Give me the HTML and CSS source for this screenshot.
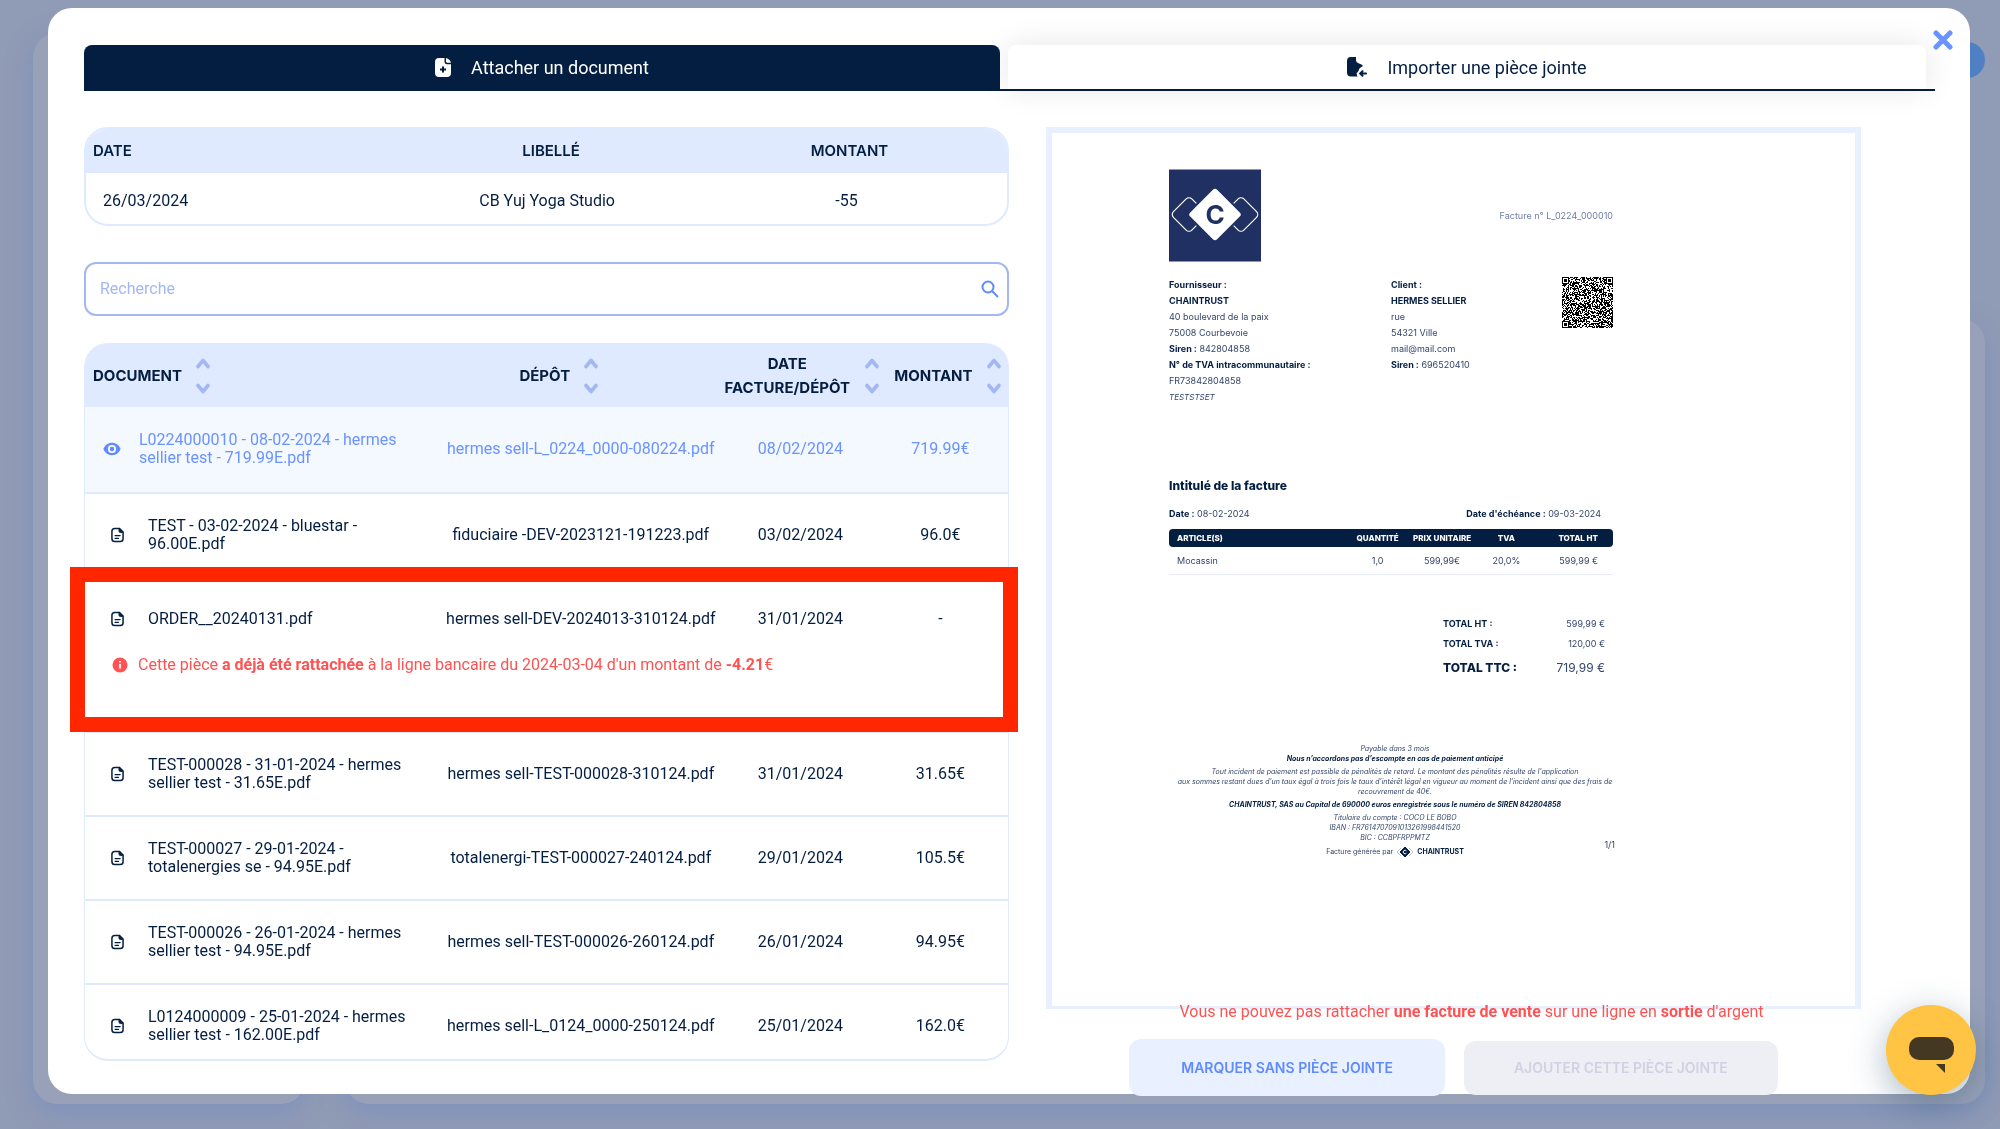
FILE: index.html
```
<!DOCTYPE html>
<html lang="fr">
<head>
  <meta charset="UTF-8">
  <meta name="viewport" content="width=device-width, initial-scale=1.0">
  <title>Attacher un document</title>
  <link rel="stylesheet" href="styles.css">
</head>
<body>
  <svg class="sprite" aria-hidden="true">
    <symbol id="icon-file" viewBox="0 0 14 16">
      <path d="M4 1h5.2L13 4.8V12a3 3 0 0 1-3 3H4a3 3 0 0 1-3-3V4a3 3 0 0 1 3-3z" fill="none" stroke="currentColor" stroke-width="1.6"/>
      <path d="M8.6 1.2v2.6a1.6 1.6 0 0 0 1.6 1.6h2.6z" fill="currentColor" stroke="currentColor"/>
      <path d="M4.4 8.6h5.4M4.4 11.6h3.6" stroke="currentColor" stroke-width="1.4" stroke-linecap="round"/>
    </symbol>
    <symbol id="icon-sort" viewBox="0 0 14 36">
      <path d="M2 8.500l5-6 5 6M2 27.500l5 6 5-6" fill="none" stroke="currentColor" stroke-width="3.600" stroke-linecap="round" stroke-linejoin="round"/>
    </symbol>
  </svg>

  <div class="backdrop">
    <div class="back-card"></div>
    <div class="back-card"></div>
    <span class="back-dot"></span>
  </div>

  <main class="modal">
    <button class="close" aria-label="Fermer">
      <svg viewBox="0 0 20 20"><path d="M3 3l14 14M17 3L3 17" stroke="currentColor" stroke-width="5" stroke-linecap="round"/></svg>
    </button>

    <nav class="tabs">
      <button class="tab active">
        <svg viewBox="0 0 16 20"><path d="M4 1h5.500v4A2.500 2.500 0 0 0 12 7.200h4V16a4 4 0 0 1-4 4H4a4 4 0 0 1-4-4V5a4 4 0 0 1 4-4z" fill="#fff"/><path d="M11 1c2.500.6 4.400 2.300 5 4.800h-3.500A1.500 1.500 0 0 1 11 4.300z" fill="#fff"/><path d="M8 9.500v6M5 12.500h6" stroke="#041e42" stroke-width="2"/></svg>
        Attacher un document
      </button>
      <button class="tab">
        <svg viewBox="0 0 20 20"><path d="M4 0h5v3.500a3 3 0 0 0 2.500 2.700L15.500 8v1.500c-2 .8-3.500 2-4 4.500l-2 2.500 1 3H4a4 4 0 0 1-4-4V4a4 4 0 0 1 4-4z" fill="#041e42"/><path d="M19 16.500h-5.500M15.500 14.300l-2.300 2.200 2.300 2.200" fill="none" stroke="#041e42" stroke-width="2" stroke-linecap="round"/></svg>
        Importer une pièce jointe
      </button>
    </nav>

    <div class="content">
      <section class="left">
        <table class="summary">
          <thead>
            <tr><th class="s-date">Date</th><th class="s-label">Libellé</th><th class="s-amount">Montant</th></tr>
          </thead>
          <tbody>
            <tr><td>26/03/2024</td><td>CB Yuj Yoga Studio</td><td>-55</td></tr>
          </tbody>
        </table>

        <div class="search">
          <input type="text" placeholder="Recherche" aria-label="Recherche">
          <button aria-label="Lancer la recherche">
            <svg viewBox="0 0 18 18"><circle cx="7" cy="7" r="5.500"/><path d="M11 11l6 6"/></svg>
          </button>
        </div>

        <table class="docs">
          <thead>
            <tr>
              <th class="c-doc"><div>Document <svg><use href="#icon-sort"/></svg></div></th>
              <th class="c-depot"><div>Dépôt <svg><use href="#icon-sort"/></svg></div></th>
              <th class="c-date"><div><span>Date facture/dépôt</span> <svg><use href="#icon-sort"/></svg></div></th>
              <th class="c-amount"><div>Montant <svg><use href="#icon-sort"/></svg></div></th>
            </tr>
          </thead>
          <tbody>
            <tr class="selected">
              <td><div class="doc"><svg class="eye" viewBox="0 0 18 14"><path d="M9 .8c4 0 7.200 2.700 8.600 6.200-1.400 3.500-4.600 6.200-8.600 6.200S1.800 10.500.4 7C1.800 3.500 5 .8 9 .8z" fill="#5f8bff"/><circle cx="9" cy="7" r="3.200" fill="none" stroke="#fff" stroke-width="1.800"/></svg><span>L0224000010 - 08-02-2024 - hermes sellier test - 719.99E.pdf</span></div></td>
              <td>hermes sell-L_0224_0000-080224.pdf</td><td>08/02/2024</td><td>719.99€</td>
            </tr>
            <tr>
              <td><div class="doc"><svg><use href="#icon-file"/></svg><span>TEST - 03-02-2024 - bluestar - 96.00E.pdf</span></div></td>
              <td>fiduciaire -DEV-2023121-191223.pdf</td><td>03/02/2024</td><td>96.0€</td>
            </tr>
            <tr class="attached">
              <td><div class="doc"><svg><use href="#icon-file"/></svg><span>ORDER__20240131.pdf</span></div></td>
              <td>hermes sell-DEV-2024013-310124.pdf</td><td>31/01/2024</td><td>-</td>
            </tr>
            <tr class="notice">
              <td colspan="4">
                <div class="notice-text">
                  <svg viewBox="0 0 16 16"><circle cx="8" cy="8" r="7.500" fill="#ff5252"/><path d="M8 7v4.500M8 4v1.400" stroke="#fff" stroke-width="1.800"/></svg>
                  <span>Cette pièce <b>a déjà été rattachée</b> à la ligne bancaire du 2024-03-04 d'un montant de <b>-4.21</b>€</span>
                </div>
                <div class="highlight"></div>
              </td>
            </tr>
            <tr>
              <td><div class="doc"><svg><use href="#icon-file"/></svg><span>TEST-000028 - 31-01-2024 - hermes sellier test - 31.65E.pdf</span></div></td>
              <td>hermes sell-TEST-000028-310124.pdf</td><td>31/01/2024</td><td>31.65€</td>
            </tr>
            <tr>
              <td><div class="doc"><svg><use href="#icon-file"/></svg><span>TEST-000027 - 29-01-2024 - totalenergies se - 94.95E.pdf</span></div></td>
              <td>totalenergi-TEST-000027-240124.pdf</td><td>29/01/2024</td><td>105.5€</td>
            </tr>
            <tr>
              <td><div class="doc"><svg><use href="#icon-file"/></svg><span>TEST-000026 - 26-01-2024 - hermes sellier test - 94.95E.pdf</span></div></td>
              <td>hermes sell-TEST-000026-260124.pdf</td><td>26/01/2024</td><td>94.95€</td>
            </tr>
            <tr>
              <td><div class="doc"><svg><use href="#icon-file"/></svg><span>L0124000009 - 25-01-2024 - hermes sellier test - 162.00E.pdf</span></div></td>
              <td>hermes sell-L_0124_0000-250124.pdf</td><td>25/01/2024</td><td>162.0€</td>
            </tr>
          </tbody>
        </table>
      </section>

      <section class="right">
        <div class="viewer">
          <article class="invoice">
            <div class="inv-top">
              <svg class="inv-logo" viewBox="0 0 92 92">
                <rect width="92" height="92" fill="#203062"/>
                <g fill="none" stroke="#fff" stroke-width="1.200">
                  <rect x="7" y="32" width="26" height="26" rx="4" transform="rotate(45 20 45)"/>
                  <rect x="59" y="32" width="26" height="26" rx="4" transform="rotate(45 72 45)"/>
                </g>
                <rect x="26" y="25" width="40" height="40" rx="4" transform="rotate(45 46 45)" fill="#fff" stroke="#203062" stroke-width="2"/>
                <text x="46" y="54" text-anchor="middle" class="logo-letter">C</text>
              </svg>
              <span class="inv-number">Facture n° L_0224_000010</span>
            </div>

            <div class="inv-parties">
              <div>
                <b>Fournisseur :</b><br>
                <b>CHAINTRUST</b><br>
                40 boulevard de la paix<br>
                75008 Courbevoie<br>
                <b>Siren :</b> 842804858<br>
                <b>N° de TVA intracommunautaire :</b><br>
                FR73842804858<br>
                <i>TESTSTSET</i>
              </div>
              <div>
                <b>Client :</b><br>
                <b>HERMES SELLIER</b><br>
                rue<br>
                54321 Ville<br>
                mail@mail.com<br>
                <b>Siren :</b> 696520410
              </div>
              <canvas class="qr" id="qr" width="51" height="51"></canvas>
            </div>

            <h2>Intitulé de la facture</h2>
            <div class="inv-dates">
              <span><b>Date :</b> 08-02-2024</span>
              <span><b>Date d'échéance :</b> 09-03-2024</span>
            </div>

            <table class="inv-lines">
              <thead><tr><th>Article(s)</th><th>Quantité</th><th>Prix unitaire</th><th>TVA</th><th>Total HT</th></tr></thead>
              <tbody><tr><td>Mocassin</td><td>1,0</td><td>599,99€</td><td>20,0%</td><td>599,99 €</td></tr></tbody>
            </table>

            <div class="inv-totals">
              <div><b>TOTAL HT :</b><span>599,99 €</span></div>
              <div><b>TOTAL TVA :</b><span>120,00 €</span></div>
              <div class="ttc"><b>TOTAL TTC :</b><span>719,99 €</span></div>
            </div>

            <footer class="inv-footer">
              <p>Payable dans 3 mois<br><b>Nous n’accordons pas d’escompte en cas de paiement anticipé</b></p>
              <p>Tout incident de paiement est passible de pénalités de retard. Le montant des pénalités résulte de l'application<br>aux sommes restant dues d'un taux égal à trois fois le taux d'intérêt légal en vigueur au moment de l'incident ainsi que des frais de<br>recouvrement de 40€.</p>
              <p><b>CHAINTRUST, SAS au Capital de 690000 euros enregistrée sous le numéro de SIREN 842804858</b></p>
              <p>Titulaire du compte : COCO LE BOBO<br>IBAN : FR7614707091013261998441520<br>BIC : CCBPFRPPMTZ</p>
              <div class="generated">
                Facture générée par
                <svg viewBox="0 0 18 12"><g fill="none" stroke="#8a94ad" stroke-width=".6"><path d="M5 2L1 6l4 4M13 2l4 4-4 4"/></g><path d="M9 1l5 5-5 5-5-5z" fill="#041e42" stroke="#041e42" stroke-linejoin="round"/><path d="M10.400 4.800a1.800 1.800 0 1 0 0 2.400" fill="none" stroke="#fff"/></svg>
                <b>CHAINTRUST</b>
              </div>
              <span class="page-no">1/1</span>
            </footer>
          </article>
        </div>

        <p class="error">Vous ne pouvez pas rattacher <b>une facture de vente</b> sur une ligne en <b>sortie</b> d'argent</p>
        <div class="actions">
          <button class="btn">Marquer sans pièce jointe</button>
          <button class="btn" disabled>Ajouter cette pièce jointe</button>
        </div>
      </section>
    </div>
  </main>

  <button class="chat" aria-label="Chat">
    <svg viewBox="0 0 45 36"><rect width="45" height="23" rx="10" fill="#443823"/><path d="M27 27h9v9z" fill="#443823"/></svg>
  </button>

  <script src="script.js"></script>
</body>
</html>
```
FILE: styles.css
```
* {
  box-sizing: border-box;
}

body {
  margin: 0;
  min-height: 100vh;
  display: flex;
  background: #909bb5;
  color: #041e42;
  font-family: Roboto, sans-serif;
  font-size: 16px;
  line-height: 18px;
}

button {
  font-family: inherit;
  border: 0;
  padding: 0;
  background: none;
  cursor: pointer;
}

.sprite {
  position: absolute;
  width: 0;
  height: 0;
}

/* page behind the modal */
.backdrop {
  position: fixed;
  inset: 0;
  display: grid;
  grid-template-columns: 272px 1fr;
  gap: 40px;
  padding: 33px 15px 25px 33px;
}

.back-card {
  border-radius: 24px;
  background: #98a1b7;
  box-shadow: 0 8px 24px rgba(110, 135, 195, 0.5);
}

.back-card:nth-child(2) {
  margin-top: 286px;
}

.back-dot {
  position: absolute;
  top: 42px;
  right: 15px;
  width: 36px;
  height: 36px;
  border-radius: 50%;
  background: #5080c4;
}

.modal {
  position: relative;
  flex: 1;
  display: flex;
  flex-direction: column;
  margin: 8px 30px 35px 48px;
  padding: 37px 35px 0 36px;
  background: #fff;
  border-radius: 24px;
}

.close {
  position: absolute;
  top: 22px;
  right: 17px;
  width: 20px;
  height: 20px;
  color: #6a93ff;
}

.close svg {
  display: block;
}

.tabs {
  display: grid;
  grid-template-columns: 916fr 918fr;
  column-gap: 8px;
  padding-right: 9px;
  border-bottom: 2px solid #041e42;
}

.tab {
  display: flex;
  align-items: center;
  justify-content: center;
  gap: 20px;
  height: 44px;
  font-size: 18px;
  color: #041e42;
  border-radius: 8px 8px 0 0;
  box-shadow: 0 0 30px rgba(0, 0, 0, 0.1);
}

.tab svg {
  height: 20px;
}

.tab.active {
  position: relative;
  background: #041e42;
  color: #fff;
  box-shadow: none;
}

.content {
  flex: 1;
  display: grid;
  grid-template-columns: 925fr 815fr;
  gap: 37px;
  margin-top: 36px;
  padding-right: 74px;
}

table {
  width: 100%;
  border-collapse: separate;
  border-spacing: 0;
  table-layout: fixed;
}

th {
  font-family: Inter, sans-serif;
  font-size: 15px;
  line-height: 24px;
  text-transform: uppercase;
}

/* bank line */
.summary {
  border: 2px solid #dfe9ff;
  border-radius: 24px;
  overflow: hidden;
}

.summary th {
  height: 44px;
  padding: 0;
  background: #dfe9ff;
  font-weight: 600;
}

.summary td {
  padding: 19px 8px 14px 0;
  text-align: center;
}

.summary th:first-child {
  padding-left: 7px;
  text-align: left;
}

.summary td:first-child {
  padding-left: 17px;
  text-align: left;
}

.s-date {
  width: 35%;
}

.s-label {
  width: 31%;
}

.s-amount {
  width: 34%;
}

.summary .s-amount {
  padding-right: 2px;
}

.search {
  display: flex;
  align-items: center;
  height: 54px;
  margin: 36px 0 27px;
  padding: 0 8px 0 14px;
  border: 2px solid #a3b8f2;
  border-radius: 12px;
}

.search input {
  flex: 1;
  border: 0;
  padding: 0;
  outline: none;
  background: none;
  font: inherit;
}

.search input::placeholder {
  color: #a3b8f2;
}

.search button {
  width: 18px;
  height: 18px;
}

.search svg {
  display: block;
  fill: none;
  stroke: #5f8bff;
  stroke-width: 2;
}

/* documents */
.docs {
  border: 1px solid #dfe9ff;
  border-bottom-width: 2px;
  border-radius: 24px;
}

.docs th {
  height: 63px;
  padding: 0;
  background: #dfe9ff;
  font-weight: 700;
}

.docs th:first-child {
  border-top-left-radius: 22px;
}

.docs th:last-child {
  border-top-right-radius: 22px;
}

.docs th div {
  display: flex;
  align-items: center;
  justify-content: center;
  gap: 14px;
}

.docs th svg {
  flex: none;
  width: 14px;
  height: 36px;
  color: #a3b8f2;
}

.docs .c-doc {
  width: 38%;
  padding-left: 8px;
}

.docs .c-doc div {
  justify-content: flex-start;
}

.docs .c-depot {
  width: 31%;
  padding-right: 40px;
}

.docs .c-date {
  width: 17%;
  padding-left: 2px;
}

.docs .c-amount {
  width: 14%;
  padding-left: 8px;
}

.docs td {
  padding: 23px 0;
  text-align: center;
  border-bottom: 2px solid #dfe9ff;
}

.docs td:nth-child(2) {
  padding-left: 4px;
}

.docs td:last-child {
  padding-right: 6px;
}

.doc {
  display: flex;
  align-items: center;
  gap: 24px;
  max-width: 326px;
  padding-left: 26px;
  text-align: left;
}

.doc svg {
  flex: none;
  width: 13px;
  height: 16px;
}

.doc .eye {
  width: 18px;
  height: 14px;
}

.docs .selected td {
  padding-top: 24px;
  padding-bottom: 25px;
  background: #f4f8ff;
  color: #6a93ff;
}

.selected .doc {
  gap: 18px;
  padding-left: 18px;
}

.docs .attached td {
  padding-top: 32px;
  padding-bottom: 28px;
  border-bottom: 0;
}

.docs .notice td {
  position: relative;
  padding: 0 0 57px;
}

.notice-text {
  display: flex;
  align-items: center;
  gap: 10px;
  padding-left: 27px;
  color: #ff5252;
}

.notice-text svg {
  width: 16px;
  height: 16px;
}

.highlight {
  position: absolute;
  left: -15px;
  right: -10px;
  bottom: -1px;
  height: 165px;
  border: 15px solid #ff2600;
}

.docs tr:last-child td {
  padding-bottom: 15px;
  border-bottom: 0;
}

/* preview */
.right {
  display: flex;
  flex-direction: column;
  margin-bottom: -2px;
}

.viewer {
  flex: 1;
  padding: 36px 0 36px 117px;
  border: 6px solid #e8efff;
  border-bottom-width: 3px;
}

.invoice {
  width: 444px;
  font-family: Inter, sans-serif;
  font-size: 9px;
  line-height: 16px;
  color: #33456a;
}

.invoice b {
  color: #041e42;
}

.inv-top {
  display: flex;
  justify-content: space-between;
  align-items: center;
}

.inv-logo {
  width: 92px;
  height: 93px;
}

.logo-letter {
  font-size: 26px;
  font-weight: 700;
  fill: #203062;
}

.inv-number {
  color: #6f7da3;
}

.inv-parties {
  display: grid;
  grid-template-columns: 222px 1fr 51px;
  align-items: start;
  margin-top: 15px;
}

.inv-parties i {
  font-size: 8px;
}

.qr {
  width: 51px;
  height: 51px;
}

.invoice h2 {
  margin: 71px 0 0;
  font-size: 12px;
  font-weight: 800;
  line-height: 20px;
  color: #041e42;
}

.inv-dates {
  display: flex;
  justify-content: space-between;
  padding: 10px 12px 7px 0;
}

.inv-lines th,
.inv-lines td {
  padding: 0;
  text-align: center;
}

.inv-lines th {
  height: 18px;
  background: #041e42;
  color: #fff;
  font-size: 8px;
  font-weight: 800;
  line-height: 18px;
}

.inv-lines td {
  height: 28px;
  border-bottom: 1px solid #e8ebf5;
}

.inv-lines th:first-child {
  width: 41%;
  border-radius: 4px 0 0 4px;
}

.inv-lines th:nth-child(2) {
  width: 12%;
}

.inv-lines th:nth-child(3) {
  width: 17%;
}

.inv-lines th:nth-child(4) {
  width: 12%;
}

.inv-lines th:last-child {
  border-radius: 0 4px 4px 0;
}

.inv-lines tr > :first-child {
  padding-left: 8px;
  text-align: left;
}

.inv-lines tr > :last-child {
  padding-right: 15px;
  text-align: right;
}

.inv-totals {
  width: 162px;
  margin: 39px 8px 0 auto;
}

.inv-totals div {
  display: flex;
  justify-content: space-between;
  line-height: 20px;
}

.inv-totals .ttc {
  font-size: 12px;
  line-height: 28px;
}

.inv-totals .ttc b {
  font-weight: 800;
}

.inv-footer {
  position: relative;
  margin: 62px -2px 0 6px;
  font-size: 7px;
  line-height: 10px;
  text-align: center;
  white-space: nowrap;
}

.inv-footer p {
  margin: 0 0 3px;
  font-style: italic;
}

.generated {
  display: flex;
  align-items: center;
  justify-content: center;
  gap: 3px;
}

.generated svg {
  width: 18px;
  height: 12px;
}

.page-no {
  position: absolute;
  right: 0;
  bottom: 8px;
  font-size: 9px;
}

.error {
  margin: -6px 0 18px;
  padding-left: 36px;
  text-align: center;
  color: #ff5252;
}

.actions {
  display: flex;
  align-items: center;
  justify-content: center;
  gap: 19px;
}

.btn {
  height: 57px;
  padding: 0 52px;
  border-radius: 12px;
  background: #e9f0ff;
  color: #5f8bff;
  font-family: Inter, sans-serif;
  font-size: 14px;
  font-weight: 600;
  text-transform: uppercase;
}

.btn:disabled {
  height: 54px;
  padding: 0 50px;
  background: #eeeff5;
  color: #d0d2e4;
  cursor: default;
}

.chat {
  position: fixed;
  right: 24px;
  bottom: 34px;
  width: 90px;
  height: 90px;
  display: flex;
  align-items: center;
  justify-content: center;
  padding-top: 10px;
  border-radius: 50%;
  background: #ffc443;
  box-shadow: 0 10px 36px rgba(40, 80, 110, 0.4);
}

.chat svg {
  width: 45px;
  height: 36px;
}
```
FILE: script.js
```
var ctx = document.getElementById('qr').getContext('2d');
var seed = 224;

for (var y = 0; y < 51; y++) {
  for (var x = 0; x < 51; x++) {
    seed = (seed * 1103515245 + 12345) % 2147483648;
    if ((seed >> 16) % 100 < 54) {
      ctx.fillRect(x, y, 1, 1);
    }
  }
}

// corner finders
[[0, 0], [44, 0], [0, 44]].forEach(function (p) {
  ctx.clearRect(p[0], p[1], 7, 7);
  ctx.strokeRect(p[0] + 0.5, p[1] + 0.5, 6, 6);
  ctx.fillRect(p[0] + 2, p[1] + 2, 3, 3);
});
```
